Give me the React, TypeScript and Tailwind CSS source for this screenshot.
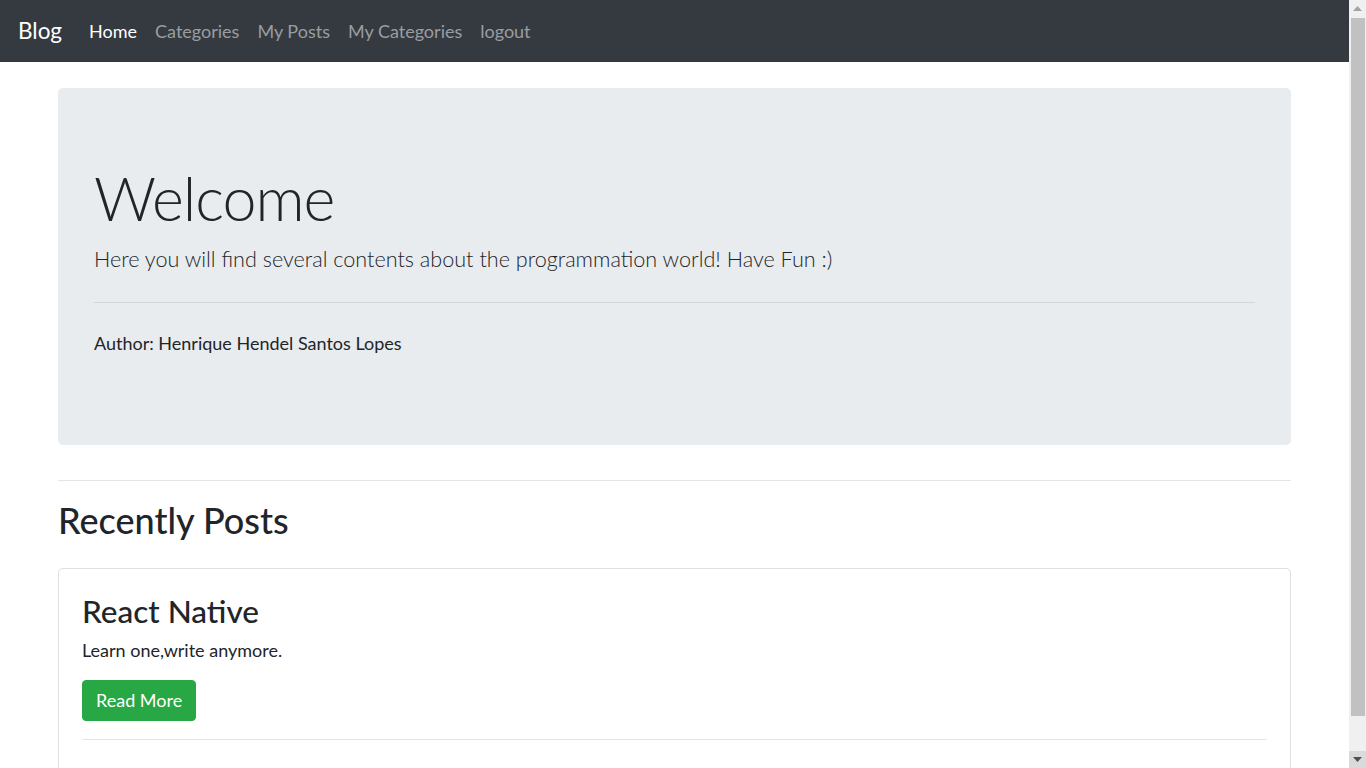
import React from "react";

const navLinks = [
  { label: "Home", active: true },
  { label: "Categories" },
  { label: "My Posts" },
  { label: "My Categories" },
  { label: "logout" },
];

const posts = [{ title: "React Native", description: "Learn one,write anymore." }];

function Scrollbar() {
  return (
    <div className="flex w-[17px] shrink-0 flex-col bg-[#f0f0f0]">
      <div className="flex h-[17px] items-center justify-center">
        <svg width="9" height="5" viewBox="0 0 9 5">
          <path d="M4.5 0 L9 5 L0 5 Z" fill="#a3a3a3" />
        </svg>
      </div>
      <div className="mt-[1px] ml-[2px] h-[698px] w-[14px] bg-[#c1c1c1]" />
      <div className="flex-1" />
      <div className="flex h-[17px] items-center justify-center bg-[#dadada]">
        <svg width="9" height="5" viewBox="0 0 9 5">
          <path d="M0 0 L9 0 L4.5 5 Z" fill="#505050" />
        </svg>
      </div>
    </div>
  );
}

export default function App() {
  return (
    <div className="flex h-screen overflow-hidden bg-white text-[#212529] font-['Lato','Noto_Sans',sans-serif]">
      <div className="min-w-0 flex-1 overflow-hidden">
        {/* navbar */}
        <nav className="flex h-[62px] items-center bg-[#343a40] px-[18px]">
          <a className="mr-[18px] text-[22.5px] leading-[34px] text-white">Blog</a>
          <ul className="flex">
            {navLinks.map((l) => (
              <li key={l.label}>
                <a
                  className={
                    "block px-[9px] text-[18px] leading-[27px] " +
                    (l.active ? "text-white" : "text-[#9a9da0]")
                  }
                >
                  {l.label}
                </a>
              </li>
            ))}
          </ul>
        </nav>

        <main className="mx-[58px] pt-[26px] pb-[36px]">
          {/* jumbotron */}
          <section className="rounded-[5px] bg-[#e9ecef] px-[36px] pt-[72px] pb-[88px]">
            <h1 className="text-[61px] font-light leading-[76px] tracking-[-1px]">Welcome</h1>
            <p className="mt-[6px] text-[21.6px] font-light leading-[34px]">
              Here you will find several contents about the programmation world! Have Fun :)
            </p>
            <hr className="mt-[26px] mb-[27px] border-t border-[#d3d6d9]" />
            <p className="text-[18px] leading-[27px]">Author: Henrique Hendel Santos Lopes</p>
          </section>

          <hr className="mt-[35px] mb-[18px] border-t border-[#e5e5e5]" />
          <h2 className="text-[36px] font-medium leading-[43px]">Recently Posts</h2>

          <div className="mt-[26px] min-h-[560px] rounded-[5px] border border-[#dfdfdf] px-[23px] pt-[23px] pb-[40px]">
            {posts.map((p) => (
              <div key={p.title}>
                <h3 className="text-[31.5px] font-medium leading-[38px]">{p.title}</h3>
                <p className="mt-[7px] text-[18px] leading-[27px]">{p.description}</p>
                <button className="mt-[16px] rounded-[4px] border border-[#28a745] bg-[#28a745] px-[13px] py-[6px] text-[18px] leading-[27px] text-white">
                  Read More
                </button>
                <hr className="mt-[18px] border-t border-[#e5e5e5]" />
              </div>
            ))}
          </div>
        </main>
      </div>
      <Scrollbar />
    </div>
  );
}
